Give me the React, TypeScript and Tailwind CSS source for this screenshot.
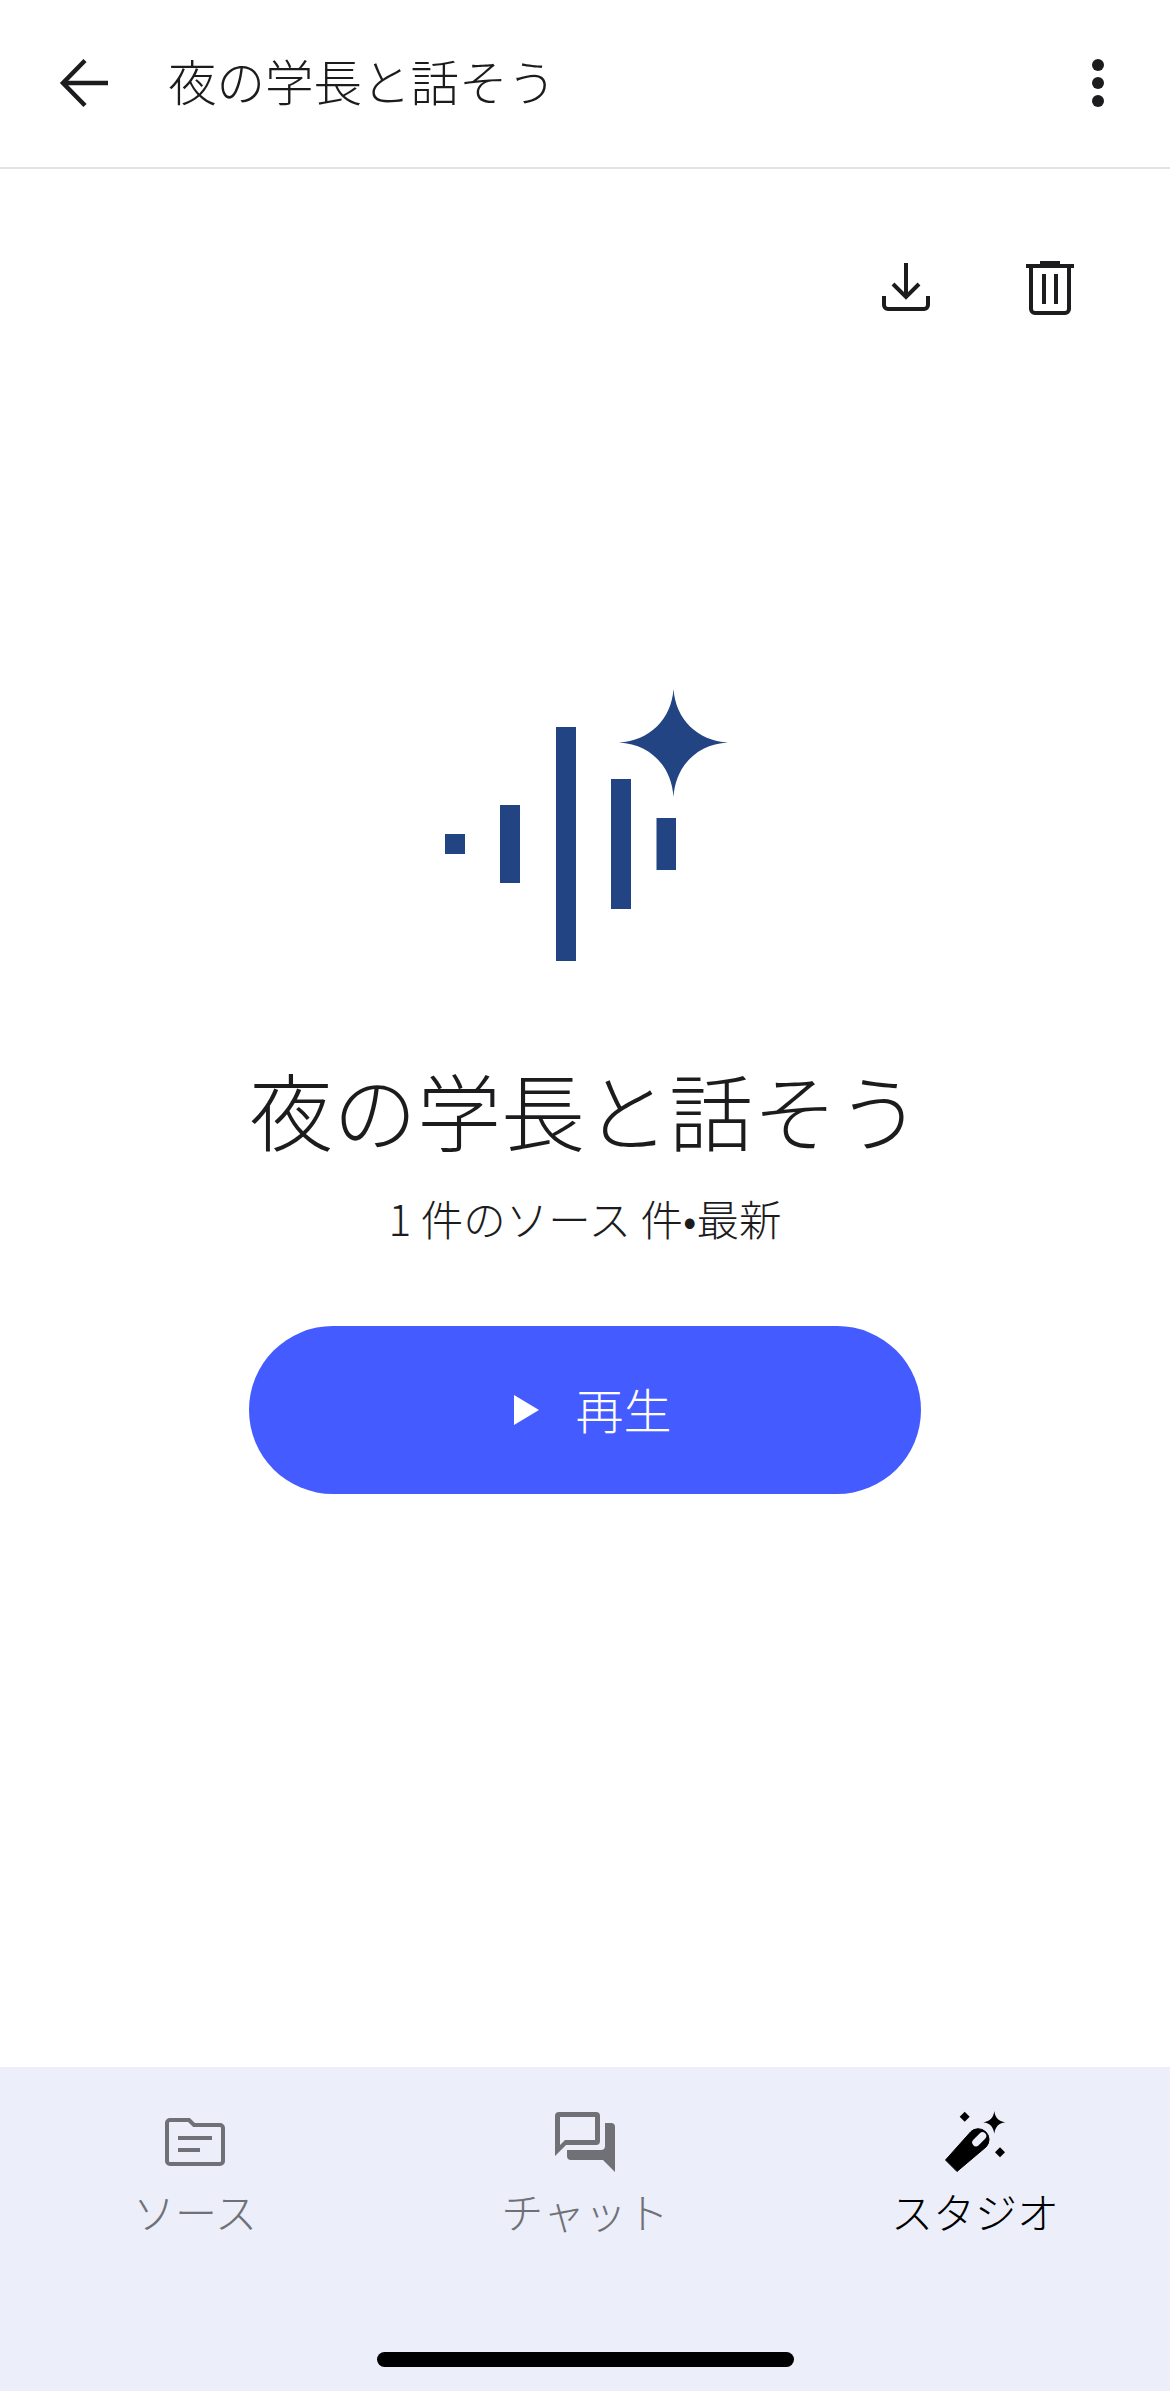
const navy = "#224482";
const ink = "#1c1c1e";
const muted = "#6f7177";

function BackIcon() {
  return (
    <svg viewBox="58 56 54 54" className="w-[54px] h-[54px] shrink-0" fill="none" stroke={ink} strokeWidth="4.5">
      <path d="M108 83H63" />
      <path d="M85 60.5L63 83l22 22.5" />
    </svg>
  );
}

function MoreIcon() {
  return (
    <svg viewBox="1070 56 54 54" className="w-[54px] h-[54px] shrink-0" fill={ink}>
      <circle cx="1098" cy="65" r="6" />
      <circle cx="1098" cy="83" r="6" />
      <circle cx="1098" cy="101" r="6" />
    </svg>
  );
}

function DownloadIcon() {
  return (
    <svg viewBox="878 261 56 56" className="w-[56px] h-[56px]" fill="none" stroke={ink} strokeWidth="4">
      <path d="M906 264v34" />
      <path d="M893 285l13 13 13-13" />
      <path d="M884 297v9a4 4 0 0 0 4 4h36a4 4 0 0 0 4-4v-9" />
    </svg>
  );
}

function TrashIcon() {
  return (
    <svg viewBox="1022 260 56 56" className="w-[56px] h-[56px]" fill="none">
      <path d="M1040 261h20v3h14v4h-48v-4h14z" fill={ink} />
      <path d="M1031 266v43a4 4 0 0 0 4 4h30a4 4 0 0 0 4-4v-43" stroke={ink} strokeWidth="4" />
      <path d="M1042 274h4v30h-4zM1054 274h4v30h-4z" fill={ink} />
    </svg>
  );
}

function AudioLogo() {
  return (
    <svg viewBox="445 689 283 272" className="w-[283px] h-[272px]" fill={navy}>
      <rect x="445" y="834" width="20" height="20" />
      <rect x="500" y="805" width="20" height="78" />
      <rect x="556" y="727" width="20" height="234" />
      <rect x="611" y="779" width="20" height="130" />
      <rect x="656.500" y="818" width="19.500" height="52" />
      <path d="M673.500 689c2 30 24 52 54.500 53.500-30.500 1.500-52.500 23-54.500 54.500-2-31.500-24-53-54.500-54.500 30.500-1.500 52.500-23.500 54.500-53.500z" />
    </svg>
  );
}

function PlayIcon() {
  return (
    <svg viewBox="0 0 25 30" className="w-[25px] h-[30px]" fill="#ffffff">
      <path d="M0 0l25 15L0 30z" />
    </svg>
  );
}

function FolderIcon() {
  return (
    <svg viewBox="163 2110 64 64" className="w-[64px] h-[64px]" fill="none" stroke={muted}>
      <path
        d="M170 2120h19l5 5h26a3 3 0 0 1 3 3v33a3 3 0 0 1-3 3h-50a3 3 0 0 1-3-3v-38a3 3 0 0 1 3-3z"
        strokeWidth="4"
      />
      <path d="M178 2138h34M178 2150h22" strokeWidth="4" />
    </svg>
  );
}

function ChatIcon() {
  return (
    <svg viewBox="553 2110 64 64" className="w-[64px] h-[64px]" fill={muted}>
      <path
        fillRule="evenodd"
        d="M559 2112h37a4 4 0 0 1 4 4v25a4 4 0 0 1-4 4h-30l-11 11v-40a4 4 0 0 1 4-4zM560 2117v28l5-5h30v-23z"
      />
      <path d="M605 2123h6a4 4 0 0 1 4 4v45l-12-12h-32a4 4 0 0 1-4-4v-6h34a4 4 0 0 0 4-4z" />
    </svg>
  );
}

function WandIcon() {
  return (
    <svg viewBox="943 2110 64 64" className="w-[64px] h-[64px]" fill="#000000">
      <path d="M945.500 2160L970.500 2132a10.500 10.500 0 0 1 15.500 15L957 2171.500z" stroke="#000000" strokeLinejoin="round" />
      <path d="M976 2142.500l6.500-6.500" stroke="#eceefa" strokeWidth="7.500" strokeLinecap="round" />
      <path d="M994.300 2111c1 7 4 10 11 11.300-7 1.300-10 4.500-11 11.500-1-7-4-10.200-11-11.500 7-1.300 10-4.300 11-11.300z" />
      <path d="M964.700 2111.700l5 5-5 5-5-5z" />
      <path d="M1000 2147.300l5 5-5 5-5-5z" />
    </svg>
  );
}

const tabs = [
  { label: "ソース", icon: <FolderIcon />, color: "text-[#6f7177]" },
  { label: "チャット", icon: <ChatIcon />, color: "text-[#6f7177]" },
  { label: "スタジオ", icon: <WandIcon />, color: "text-black" },
];

function App() {
  return (
    <div
      className="w-full h-[2391px] flex flex-col bg-white text-[#1c1c1e] font-light"
      style={{ fontFamily: '"Noto Sans CJK JP", "Noto Sans", sans-serif' }}
    >
      {/* Top bar */}
      <header className="h-[169px] shrink-0 border-b-2 border-[#e3e3e3] flex items-center pl-[58px] pr-[46px] pb-[2px]">
        <BackIcon />
        <h1 className="ml-[56px] mb-[6px] text-[48.500px] leading-[60px] font-light flex-1">夜の学長と話そう</h1>
        <MoreIcon />
      </header>

      <main className="flex-1 flex flex-col items-center">
        {/* Actions */}
        <div className="w-full flex justify-end gap-[88px] pt-[91px] pr-[92px]">
          <DownloadIcon />
          <TrashIcon />
        </div>

        <div className="mt-[373px] ml-[3px]">
          <AudioLogo />
        </div>

        <h2 className="mt-[98px] text-[84px] leading-[100px] font-light">夜の学長と話そう</h2>
        <p className="mt-[34px] text-[42.500px] leading-[50px]">1 件のソース 件•最新</p>

        <button className="mt-[83px] w-[672px] h-[168px] rounded-full bg-[#445cff] flex items-center justify-center gap-[36px] pl-[16px] text-white">
          <PlayIcon />
          <span className="mb-[5px] text-[48px] leading-[60px]">再生</span>
        </button>
      </main>

      {/* Bottom tabs */}
      <nav className="h-[324px] shrink-0 bg-[#eceefa] flex flex-col">
        <div className="grid grid-cols-3 pt-[43px]">
          {tabs.map((tab) => (
            <div key={tab.label} className="flex flex-col items-center">
              {tab.icon}
              <span className={`mt-[13px] text-[42px] leading-[48px] ${tab.color}`}>{tab.label}</span>
            </div>
          ))}
        </div>
        <div className="mt-auto mb-[24px] mx-auto w-[417px] h-[15px] rounded-[8px] bg-black" />
      </nav>
    </div>
  );
}

export default App;
